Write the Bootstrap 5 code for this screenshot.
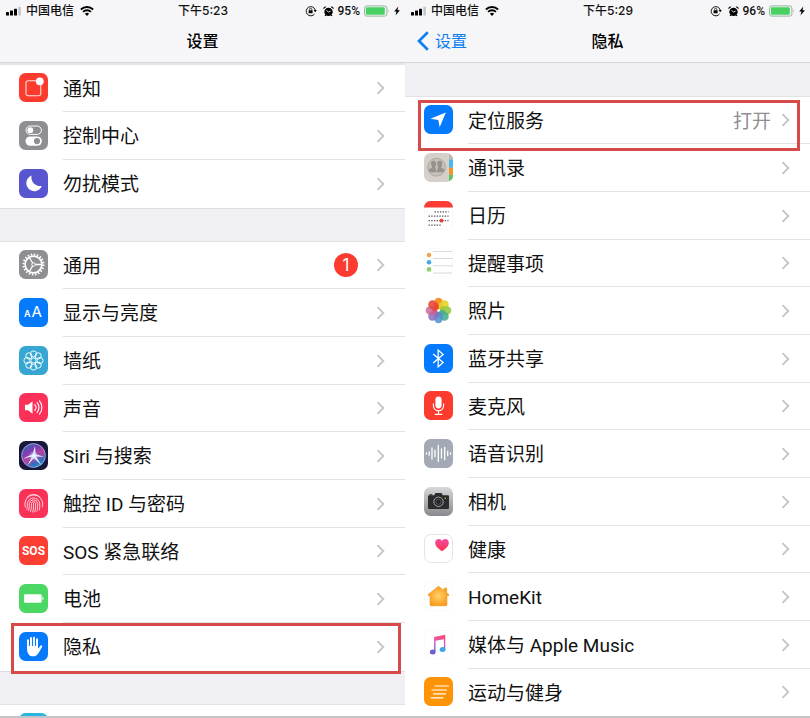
<!DOCTYPE html>
<html lang="zh-CN">
<head>
<meta charset="utf-8">
<meta name="viewport" content="width=device-width, initial-scale=1">
<title>设置 · 隐私</title>
<link href="https://cdn.jsdelivr.net/npm/bootstrap@5.3.0/dist/css/bootstrap.min.css" rel="stylesheet">
<style>
  body { font-family: Inter, "Noto Sans CJK SC", sans-serif; color: #111; background: #fff; }
  .screens { border-bottom: 2px solid #c4c4c6; }
  .screen { background: #efeff4; }
  .topbar { background: #f6f6f8; border-bottom: 1px solid #d6d6da; }
  .status { height: 21px; padding: 1px 5px 0 6px; font-size: 12px; line-height: 20px; display: grid; grid-template-columns: 1fr auto 1fr; }
  .carrier { gap: 4px; }
  .carrier span { margin-right: 2px; }
  .indicators { gap: 4px; }
  .indicators svg:first-child { margin-right: 2px; }
  .percent { font-family: Roboto, sans-serif; }
  .titlebar { height: 41px; font-size: 16px; line-height: 40px; display: grid; grid-template-columns: 1fr auto 1fr; }
  .titlebar h1 { font-size: 16px; line-height: 40px; font-weight: 500; color: #000; }
  .back { color: #0d7fee; padding-left: 12px; gap: 6px; height: 40px; }
  .set-row { height: 48px; color: #111; }
  .set-row:nth-child(3n+1) { height: 47px; }
  .set-link { padding-left: 19px; gap: 15px; font-size: 19px; line-height: 28px; }
  .set-link > svg { margin-bottom: 2px; }
  .set-body { border-bottom: 1px solid #e2e2e5; padding-right: 20px; gap: 10px; }
  .set-body > span:not(.count) { padding-top: 3px; }
  .set-row:last-child .set-body { border-bottom-color: transparent; }
  .set-value { color: #8e8e93; }
  .latin { font-family: Roboto, "Noto Sans CJK SC", sans-serif; }
  .count { width: 24px; height: 24px; margin-right: 8px; background: #fc3b30; font-size: 17px; line-height: 24px; }
  .gap-top { height: 2px; background: #e4e5e9; }
  .gap-section { height: 34px; border-top: 1px solid #dedee2; border-bottom: 1px solid #e2e2e6; }
  .gap-first { height: 34px; border-bottom: 1px solid #e2e2e6; }
  .outlined { z-index: 2; }
  .outlined::after { content: ""; position: absolute; border: 3px solid #d64b4a; pointer-events: none; }
  .outlined-a::after { inset: 0 4px -3px 11px; }
  .outlined-b::after { inset: 3px 10px -7px 13px; }
</style>
<script src="https://cdn.jsdelivr.net/npm/bootstrap@5.3.0/dist/js/bootstrap.bundle.min.js" defer></script>
</head>
<body>
<svg width="0" height="0" class="position-absolute" aria-hidden="true">
  <defs>
    <symbol id="chev" viewBox="0 0 9 14"><path d="M1.5 1.2 7.3 7l-5.8 5.8" fill="none" stroke="#c5c5ca" stroke-width="1.9"/></symbol>
    <symbol id="signal" viewBox="0 0 16 10"><rect x="0" y="6" width="3" height="3.5" rx=".6"/><rect x="4" y="4.5" width="3" height="5" rx=".6"/><rect x="8" y="2.7" width="3" height="6.8" rx=".6"/><rect x="12.4" y=".8" width="2.4" height="8.7" rx=".6" fill="#bfc3c2"/></symbol>
    <symbol id="wifi" viewBox="0 0 14 10"><path d="M.9 3.5a8.8 8.8 0 0 1 12.2 0M3.1 5.9a5.6 5.6 0 0 1 7.8 0" fill="none" stroke="#000" stroke-width="1.9"/><path d="M4.9 7.7a3.1 3.1 0 0 1 4.2 0L7 9.9z"/></symbol>
    <symbol id="rotlock" viewBox="0 0 12 12"><path d="M9.6 8.8A4.6 4.6 0 1 1 10.2 5" fill="none" stroke="#111" stroke-width="1"/><path d="M8.6 5h3.2l-1.6 2.2z"/><rect x="3.6" y="5.2" width="4" height="3.1" rx=".4"/><path d="M4.4 5.4v-.9a1.2 1.2 0 0 1 2.4 0v.9" fill="none" stroke="#111" stroke-width=".8"/></symbol>
    <symbol id="alarm" viewBox="0 0 11 11"><circle cx="5.5" cy="5.9" r="4.2"/><path d="M.5 3.2A2 2 0 0 1 3.4.8zM10.5 3.2A2 2 0 0 0 7.6.8zM2.4 8.6l-.8 1.200.8.5 1.200-1zM8.6 8.600l.8 1.200-.8.5-1.200-1z"/><path d="M3.5 4.2 5.5 6.2 7.6 5" fill="none" stroke="#f6f6f8" stroke-width=".9"/></symbol>
    <symbol id="batt" viewBox="0 0 26 12"><rect x=".5" y=".9" width="22.4" height="10.2" rx="2.2" fill="none" stroke="#93b69a" stroke-width="1"/><rect x="1.9" y="2.2" width="18.9" height="7.6" rx="1" fill="#46d160"/><path d="M24 4.3q1.4 1.7 0 3.4z" fill="#93a897"/></symbol>
    <symbol id="bolt" viewBox="0 0 6 10"><path d="M4.300.5.2 5.500h2.300L1.500 9.500 5.900 4.300H3.500z"/></symbol>
    <linearGradient id="camG" x2="0" y2="1"><stop stop-color="#d8d8da"/><stop offset="1" stop-color="#8a8a8e"/></linearGradient>
    <linearGradient id="heartG" x2="0" y2="1"><stop stop-color="#f74ba0"/><stop offset="1" stop-color="#fb3448"/></linearGradient>
    <radialGradient id="homeG"><stop stop-color="#ffd36c"/><stop offset="1" stop-color="#f89c1c"/></radialGradient>
    <linearGradient id="musicG" gradientUnits="userSpaceOnUse" x1="18" y1="4" x2="12" y2="24"><stop stop-color="#fb4b6c"/><stop offset=".45" stop-color="#e459b6"/><stop offset=".75" stop-color="#6d66d8"/><stop offset="1" stop-color="#6a5fd0"/></linearGradient>
    <linearGradient id="siriG" x1="0.2" y1="0" x2=".8" y2="1"><stop stop-color="#2d6cae"/><stop offset=".3" stop-color="#7c3fb4"/><stop offset=".55" stop-color="#b8439f"/><stop offset=".8" stop-color="#2f6fc4"/><stop offset="1" stop-color="#1fb6c0"/></linearGradient>
    <radialGradient id="siriW"><stop stop-color="#fff"/><stop offset=".4" stop-color="#d8e9ff" stop-opacity=".7"/><stop offset="1" stop-color="#8fb6ff" stop-opacity="0"/></radialGradient>
  </defs>
</svg>

<main class="container-fluid p-0">
<div class="row g-0 vh-100 overflow-hidden screens">

<section class="col-6 screen h-100 overflow-hidden" aria-label="设置">
  <header class="topbar">
    <div class="status fw-medium">
      <div class="carrier d-flex align-items-center"><svg width="16" height="10"><use href="#signal"/></svg><span>中国电信</span><svg width="14" height="10"><use href="#wifi"/></svg></div>
      <time>下午5:23</time>
      <div class="indicators d-flex align-items-center justify-content-end"><svg width="12" height="12"><use href="#rotlock"/></svg><svg width="11" height="11"><use href="#alarm"/></svg><span class="percent">95%</span><svg width="26" height="12"><use href="#batt"/></svg><svg width="6" height="10"><use href="#bolt"/></svg></div>
    </div>
    <div class="titlebar"><span></span><h1 class="m-0">设置</h1><span></span></div>
  </header>
  <div class="gap-top"></div>

  <ul class="list-group list-group-flush rounded-0">
    <li class="list-group-item border-0 p-0 set-row"><a href="#" class="set-link d-flex align-items-center h-100 text-reset text-decoration-none">
      <svg width="29" height="29" viewBox="0 0 29 29"><rect width="29" height="29" rx="6.5" fill="#fc3b2f"/><path d="M17.5 7.7H9.2a2.2 2.2 0 0 0-2.2 2.2v10.6a2.2 2.2 0 0 0 2.2 2.2h10.4a2.2 2.2 0 0 0 2.2-2.2V12" fill="none" stroke="#ffe2de" stroke-width="1.1"/><circle cx="20.8" cy="8.3" r="3.9" fill="#fff"/></svg>
      <span class="set-body d-flex align-items-center flex-grow-1 h-100"><span class="me-auto">通知</span><svg width="9" height="14"><use href="#chev"/></svg></span></a></li>
    <li class="list-group-item border-0 p-0 set-row"><a href="#" class="set-link d-flex align-items-center h-100 text-reset text-decoration-none">
      <svg width="29" height="29" viewBox="0 0 29 29"><rect width="29" height="29" rx="6.5" fill="#8e8e93"/><rect x="7" y="5" width="15.4" height="8.4" rx="4.2" fill="none" stroke="#fff"/><circle cx="11.3" cy="9.2" r="2.9" fill="#fff"/><rect x="6.5" y="15.4" width="16.4" height="9.4" rx="4.7" fill="#fff"/><circle cx="18" cy="20.1" r="3.1" fill="#8e8e93"/></svg>
      <span class="set-body d-flex align-items-center flex-grow-1 h-100"><span class="me-auto">控制中心</span><svg width="9" height="14"><use href="#chev"/></svg></span></a></li>
    <li class="list-group-item border-0 p-0 set-row"><a href="#" class="set-link d-flex align-items-center h-100 text-reset text-decoration-none">
      <svg width="29" height="29" viewBox="0 0 29 29"><rect width="29" height="29" rx="6.5" fill="#5855d0"/><path d="M12.6 6.6a8.6 8.6 0 0 0 10.2 10.3A8 8 0 1 1 12.6 6.6z" fill="#fff"/></svg>
      <span class="set-body d-flex align-items-center flex-grow-1 h-100"><span class="me-auto">勿扰模式</span><svg width="9" height="14"><use href="#chev"/></svg></span></a></li>
  </ul>
  <div class="gap-section"></div>

  <ul class="list-group list-group-flush rounded-0">
    <li class="list-group-item border-0 p-0 set-row"><a href="#" class="set-link d-flex align-items-center h-100 text-reset text-decoration-none">
      <svg width="29" height="29" viewBox="0 0 29 29"><rect width="29" height="29" rx="6.5" fill="#8e8e93"/><circle cx="14.5" cy="14.5" r="8.4" fill="none" stroke="#fff" stroke-width="1.7"/><circle cx="14.5" cy="14.5" r="10" fill="none" stroke="#fff" stroke-width="2" stroke-dasharray="1.57 1.57"/><circle cx="14.5" cy="14.5" r="1.7" fill="none" stroke="#fff"/><path d="M16.2 14.5h6.4M13.6 13 10.4 7.5M13.6 16l-3.2 5.5" stroke="#fff" stroke-width="1.3"/></svg>
      <span class="set-body d-flex align-items-center flex-grow-1 h-100"><span class="me-auto">通用</span><span class="count rounded-circle text-white text-center">1</span><svg width="9" height="14"><use href="#chev"/></svg></span></a></li>
    <li class="list-group-item border-0 p-0 set-row"><a href="#" class="set-link d-flex align-items-center h-100 text-reset text-decoration-none">
      <svg width="29" height="29" viewBox="0 0 29 29" font-family="Inter, sans-serif" fill="#fff"><rect width="29" height="29" rx="6.5" fill="#067afd"/><text x="5" y="19" font-size="9" font-weight="600">A</text><text x="12.600" y="19" font-size="15">A</text></svg>
      <span class="set-body d-flex align-items-center flex-grow-1 h-100"><span class="me-auto">显示与亮度</span><svg width="9" height="14"><use href="#chev"/></svg></span></a></li>
    <li class="list-group-item border-0 p-0 set-row"><a href="#" class="set-link d-flex align-items-center h-100 text-reset text-decoration-none">
      <svg width="29" height="29" viewBox="0 0 29 29"><rect width="29" height="29" rx="6.5" fill="#37a6d2"/><g fill="none" stroke="#f0fbff" stroke-width="1"><circle cx="14.5" cy="14.5" r="2.6"/><circle cx="14.5" cy="8" r="3.1"/><circle cx="19.1" cy="9.9" r="3.1"/><circle cx="21" cy="14.5" r="3.1"/><circle cx="19.1" cy="19.1" r="3.1"/><circle cx="14.5" cy="21" r="3.1"/><circle cx="9.9" cy="19.1" r="3.1"/><circle cx="8" cy="14.5" r="3.1"/><circle cx="9.9" cy="9.9" r="3.1"/></g></svg>
      <span class="set-body d-flex align-items-center flex-grow-1 h-100"><span class="me-auto">墙纸</span><svg width="9" height="14"><use href="#chev"/></svg></span></a></li>
    <li class="list-group-item border-0 p-0 set-row"><a href="#" class="set-link d-flex align-items-center h-100 text-reset text-decoration-none">
      <svg width="29" height="29" viewBox="0 0 29 29"><rect width="29" height="29" rx="6.5" fill="#fc3159"/><path d="M6 11.8h3.2l4.3-3.5v12.4l-4.3-3.5H6z" fill="#fff"/><path d="M15.8 11.7a4.2 4.2 0 0 1 0 5.6M18.1 9.7a7.2 7.2 0 0 1 0 9.6M20.5 7.9a10.4 10.4 0 0 1 0 13.2" fill="none" stroke="#fff" stroke-width="1.1" stroke-linecap="round"/></svg>
      <span class="set-body d-flex align-items-center flex-grow-1 h-100"><span class="me-auto">声音</span><svg width="9" height="14"><use href="#chev"/></svg></span></a></li>
    <li class="list-group-item border-0 p-0 set-row"><a href="#" class="set-link d-flex align-items-center h-100 text-reset text-decoration-none">
      <svg width="29" height="29" viewBox="0 0 29 29"><rect width="29" height="29" rx="6.5" fill="#17183a"/><circle cx="14.5" cy="14.5" r="11.9" fill="url(#siriG)" stroke="#aab6e6" stroke-width=".8"/><path d="M3.800 18.500c3.500-3 6.700-4.300 9.700-4.700L16 5l.6 8.300 8.600 2.400-8.300-.2 5.600 8.700-7.700-7.100L8.500 24.500l4.300-8.500c-3-.3-6 .8-9 2.500z" fill="#e4f3ff"/><circle cx="14.8" cy="14.700" r="5" fill="url(#siriW)"/></svg>
      <span class="set-body d-flex align-items-center flex-grow-1 h-100"><span class="me-auto latin">Siri 与搜索</span><svg width="9" height="14"><use href="#chev"/></svg></span></a></li>
    <li class="list-group-item border-0 p-0 set-row"><a href="#" class="set-link d-flex align-items-center h-100 text-reset text-decoration-none">
      <svg width="29" height="29" viewBox="0 0 29 29"><rect width="29" height="29" rx="6.5" fill="#fa3257"/><g fill="none" stroke="#ffe0e5" stroke-width=".9" stroke-linecap="round"><path d="M6.300 18a9 9 0 1 1 17 0M7.800 20.400c.5-1.700.5-3.500.6-6a6.200 6.200 0 0 1 12.300 0c0 2.400.2 4.300-.2 6.500M9.500 21.600c.8-2.200.8-4.700.9-7.200a4.200 4.200 0 0 1 8.300 0c.1 3 0 5.300-.7 7.800M11.500 22.600c.9-2.500.9-5.500 1-8.200a2.100 2.100 0 0 1 4.100 0c.1 3.200 0 5.800-.9 8.600M13.700 23c.8-2.600.9-5.500.9-8.500M8 8.100a9 9 0 0 1 13 0"/></g></svg>
      <span class="set-body d-flex align-items-center flex-grow-1 h-100"><span class="me-auto latin">触控 ID 与密码</span><svg width="9" height="14"><use href="#chev"/></svg></span></a></li>
    <li class="list-group-item border-0 p-0 set-row"><a href="#" class="set-link d-flex align-items-center h-100 text-reset text-decoration-none">
      <svg width="29" height="29" viewBox="0 0 29 29"><rect width="29" height="29" rx="6.5" fill="#fc3e33"/><text x="14.500" y="19" font-family="Roboto, sans-serif" font-size="12" font-weight="700" text-anchor="middle" fill="#fff">SOS</text></svg>
      <span class="set-body d-flex align-items-center flex-grow-1 h-100"><span class="me-auto latin">SOS 紧急联络</span><svg width="9" height="14"><use href="#chev"/></svg></span></a></li>
    <li class="list-group-item border-0 p-0 set-row"><a href="#" class="set-link d-flex align-items-center h-100 text-reset text-decoration-none">
      <svg width="29" height="29" viewBox="0 0 29 29"><rect width="29" height="29" rx="6.5" fill="#4bd763"/><rect x="5" y="10.200" width="17.600" height="8.600" rx="1" fill="#fff"/><path d="M23.400 12.600c1.500.3 1.500 3.500 0 3.800z" fill="#fff"/></svg>
      <span class="set-body d-flex align-items-center flex-grow-1 h-100"><span class="me-auto">电池</span><svg width="9" height="14"><use href="#chev"/></svg></span></a></li>
    <li class="list-group-item border-0 p-0 set-row outlined outlined-a"><a href="#" class="set-link d-flex align-items-center h-100 text-reset text-decoration-none">
      <svg width="29" height="29" viewBox="0 0 29 29"><rect width="29" height="29" rx="6.5" fill="#067afd"/><g stroke="#fff" stroke-linecap="round" fill="none"><path d="M9 8.300v8M12 5.900v10M15 5.600v10M18 7.300v9" stroke-width="1.900"/><path d="M22.200 14.400 18.600 20" stroke-width="2.100"/></g><path d="M8.050 14h10.900v3l1.800-1.800 1.200 1.300c-1.500 2.800-2.500 5.200-4.300 6.700-2.300 1.700-5.600 1.500-7.500-.3-1.600-1.500-2.100-3.900-2.100-6.400z" fill="#fff"/></svg>
      <span class="set-body d-flex align-items-center flex-grow-1 h-100"><span class="me-auto">隐私</span><svg width="9" height="14"><use href="#chev"/></svg></span></a></li>
  </ul>
  <div class="gap-section"></div>
  <ul class="list-group list-group-flush rounded-0">
    <li class="list-group-item border-0 p-0 set-row"><a href="#" class="set-link d-flex align-items-center h-100" aria-label="App Store"><svg width="29" height="29" viewBox="0 0 29 29"><rect width="29" height="29" rx="6.5" fill="#2bb5e0"/></svg></a></li>
  </ul>
</section>

<section class="col-6 screen h-100 overflow-hidden" aria-label="隐私">
  <header class="topbar">
    <div class="status fw-medium">
      <div class="carrier d-flex align-items-center"><svg width="16" height="10"><use href="#signal"/></svg><span>中国电信</span><svg width="14" height="10"><use href="#wifi"/></svg></div>
      <time>下午5:29</time>
      <div class="indicators d-flex align-items-center justify-content-end"><svg width="12" height="12"><use href="#rotlock"/></svg><svg width="11" height="11"><use href="#alarm"/></svg><span class="percent">96%</span><svg width="26" height="12"><use href="#batt"/></svg><svg width="6" height="10"><use href="#bolt"/></svg></div>
    </div>
    <div class="titlebar"><a href="#" class="back d-flex align-items-center text-decoration-none"><svg width="12" height="20" viewBox="0 0 12 20"><path d="M10.800 1.200 2 10l8.800 8.800" fill="none" stroke="#0d7fee" stroke-width="2.700"/></svg><span>设置</span></a><h1 class="m-0">隐私</h1><span></span></div>
  </header>
  <div class="gap-first"></div>

  <ul class="list-group list-group-flush rounded-0">
    <li class="list-group-item border-0 p-0 set-row outlined outlined-b"><a href="#" class="set-link d-flex align-items-center h-100 text-reset text-decoration-none">
      <svg width="29" height="29" viewBox="0 0 29 29"><rect width="29" height="29" rx="6.5" fill="#067afd"/><path d="M21.800 7.400 15.700 22.200 14.300 14.900 6.400 13.800z" fill="#fff"/></svg>
      <span class="set-body d-flex align-items-center flex-grow-1 h-100"><span class="me-auto">定位服务</span><span class="set-value">打开</span><svg width="9" height="14"><use href="#chev"/></svg></span></a></li>
    <li class="list-group-item border-0 p-0 set-row"><a href="#" class="set-link d-flex align-items-center h-100 text-reset text-decoration-none">
      <svg width="29" height="29" viewBox="0 0 29 29"><rect width="29" height="29" rx="6.5" fill="#d5d1ca"/><path d="M25 1.200h.8A6 6 0 0 1 29 6.500H25z" fill="#b9b8b5"/><path d="M25 6.500h4v8.300h-4z" fill="#4fb6e6"/><path d="M25 14.800h4v7h-4z" fill="#f5942e"/><path d="M25 21.800h4c.2 3.500-1.300 5.300-4 6.200z" fill="#5fc163"/><circle cx="12.600" cy="14.200" r="8.900" fill="#c5c0b8" stroke="#a5a19b" stroke-width=".8"/><path d="M9.600 7.800c2 0 2.700 1.600 2.500 3.500-.1 1.300-.8 2.300-.8 3.200 0 1.400 1.200 1.700 1.200 4.700H6.200c-1-1-1.600-2-1.700-3 2.500-.8 3.500-1 3.500-2 0-1.100-.8-1.800-.9-3-.2-2 .6-3.400 2.500-3.400zM15.700 7.800c-2 0-2.700 1.600-2.500 3.500.1 1.300.8 2.300.8 3.200 0 1.400-1.100 1.700-1.100 4.700H19c1-1 1.600-2 1.700-3-2.500-.8-3.300-1-3.300-2 0-1.100.7-1.800.8-3 .2-2-.6-3.400-2.500-3.400z" fill="#96928c"/></svg>
      <span class="set-body d-flex align-items-center flex-grow-1 h-100"><span class="me-auto">通讯录</span><svg width="9" height="14"><use href="#chev"/></svg></span></a></li>
    <li class="list-group-item border-0 p-0 set-row"><a href="#" class="set-link d-flex align-items-center h-100 text-reset text-decoration-none">
      <svg width="29" height="29" viewBox="0 0 29 29"><rect x=".25" y=".25" width="28.500" height="28.500" rx="6.300" fill="#fff" stroke="#f0f0f2" stroke-width=".5"/><path d="M0 6.600A6.500 6.500 0 0 1 6.500 0h16A6.500 6.500 0 0 1 29 6.600z" fill="#fb3c36"/><g stroke="#555" stroke-width="1.200" stroke-dasharray="1.400 1.300" fill="none"><path d="M10.500 10.800h14M4.500 15.200h20M4.500 19.700h20M4.500 24.100h13.500"/></g><circle cx="17.500" cy="19.700" r="1.900" fill="#e93a38"/></svg>
      <span class="set-body d-flex align-items-center flex-grow-1 h-100"><span class="me-auto">日历</span><svg width="9" height="14"><use href="#chev"/></svg></span></a></li>
    <li class="list-group-item border-0 p-0 set-row"><a href="#" class="set-link d-flex align-items-center h-100 text-reset text-decoration-none">
      <svg width="29" height="29" viewBox="0 0 29 29"><rect x=".25" y=".25" width="28.500" height="28.500" rx="6.300" fill="#fff" stroke="#f2f2f4" stroke-width=".5"/><path d="M9 3.500h19M9 10.500h20M9 17.800h20M9 25h19" stroke="#d6d6d9" stroke-width=".9"/><circle cx="5" cy="7" r="2.300" fill="#f3a34a"/><circle cx="5" cy="14.200" r="2.300" fill="#49a6ea"/><circle cx="5" cy="21.400" r="2.300" fill="#8ed06c"/></svg>
      <span class="set-body d-flex align-items-center flex-grow-1 h-100"><span class="me-auto">提醒事项</span><svg width="9" height="14"><use href="#chev"/></svg></span></a></li>
    <li class="list-group-item border-0 p-0 set-row"><a href="#" class="set-link d-flex align-items-center h-100 text-reset text-decoration-none">
      <svg width="29" height="29" viewBox="0 0 29 29"><g><rect x="10.300" y="1.700" width="8.400" height="11.800" rx="4.200" fill="#f7942a"/><rect x="10.300" y="1.700" width="8.400" height="11.800" rx="4.200" fill="#e6d22a" opacity=".9" transform="rotate(45 14.500 14.500)"/><rect x="10.300" y="1.700" width="8.400" height="11.800" rx="4.200" fill="#94c83f" opacity=".88" transform="rotate(90 14.500 14.500)"/><rect x="10.300" y="1.700" width="8.400" height="11.800" rx="4.200" fill="#3fab86" opacity=".85" transform="rotate(135 14.500 14.500)"/><rect x="10.300" y="1.700" width="8.400" height="11.800" rx="4.200" fill="#4b8fd0" opacity=".85" transform="rotate(180 14.500 14.500)"/><rect x="10.300" y="1.700" width="8.400" height="11.800" rx="4.200" fill="#866dba" opacity=".85" transform="rotate(225 14.500 14.500)"/><rect x="10.300" y="1.700" width="8.400" height="11.800" rx="4.200" fill="#cb5f90" opacity=".8" transform="rotate(270 14.500 14.500)"/><rect x="10.300" y="1.700" width="8.400" height="11.800" rx="4.200" fill="#e83f2e" opacity=".85" transform="rotate(315 14.500 14.500)"/></g><circle cx="14.500" cy="14.500" r="1.200" fill="#fff"/></svg>
      <span class="set-body d-flex align-items-center flex-grow-1 h-100"><span class="me-auto">照片</span><svg width="9" height="14"><use href="#chev"/></svg></span></a></li>
    <li class="list-group-item border-0 p-0 set-row"><a href="#" class="set-link d-flex align-items-center h-100 text-reset text-decoration-none">
      <svg width="29" height="29" viewBox="0 0 29 29"><rect width="29" height="29" rx="6.5" fill="#067afd"/><path d="m9.200 9.900 9.900 8.700-4.900 4.300V6.100l4.900 4.300-9.900 8.700" fill="none" stroke="#fff" stroke-width="1.300"/></svg>
      <span class="set-body d-flex align-items-center flex-grow-1 h-100"><span class="me-auto">蓝牙共享</span><svg width="9" height="14"><use href="#chev"/></svg></span></a></li>
    <li class="list-group-item border-0 p-0 set-row"><a href="#" class="set-link d-flex align-items-center h-100 text-reset text-decoration-none">
      <svg width="29" height="29" viewBox="0 0 29 29"><rect width="29" height="29" rx="6.5" fill="#fc3b2f"/><rect x="11.400" y="5.400" width="6.200" height="12" rx="3.100" fill="#fff"/><path d="M9.400 12.500v2.300a5.100 5.100 0 0 0 10.200 0v-2.300M14.500 20v3.200M10.700 23.400h7.600" fill="none" stroke="#fff" stroke-width="1.100"/></svg>
      <span class="set-body d-flex align-items-center flex-grow-1 h-100"><span class="me-auto">麦克风</span><svg width="9" height="14"><use href="#chev"/></svg></span></a></li>
    <li class="list-group-item border-0 p-0 set-row"><a href="#" class="set-link d-flex align-items-center h-100 text-reset text-decoration-none">
      <svg width="29" height="29" viewBox="0 0 29 29"><rect width="29" height="29" rx="6.5" fill="#a3a9b5"/><path d="M2.500 13.800v1.400M5.200 12.800v3.400M8 9v11M11 11.200v6.600M14.300 6.400v16.200M17.500 10v9M20.700 8.300v12.400M23.700 12.300v4.400M26.500 13.800v1.400" stroke="#fff" stroke-width="1.300" stroke-linecap="round"/></svg>
      <span class="set-body d-flex align-items-center flex-grow-1 h-100"><span class="me-auto">语音识别</span><svg width="9" height="14"><use href="#chev"/></svg></span></a></li>
    <li class="list-group-item border-0 p-0 set-row"><a href="#" class="set-link d-flex align-items-center h-100 text-reset text-decoration-none">
      <svg width="29" height="29" viewBox="0 0 29 29"><rect width="29" height="29" rx="6.5" fill="url(#camG)"/><path d="M5.200 8.300h5l1.300-2.300h6l1.300 2.300h5a1.200 1.200 0 0 1 1.200 1.200v11.300a1.200 1.200 0 0 1-1.200 1.200H5.200A1.200 1.200 0 0 1 4 20.800V9.500a1.200 1.200 0 0 1 1.200-1.200z" fill="#2c2c2f"/><path d="M5.500 7.200h2.800v1.300H5.500z" fill="#2c2c2f"/><circle cx="14.500" cy="14.800" r="4.700" fill="#252528" stroke="#a9a9ad" stroke-width="1"/><circle cx="14.500" cy="14.800" r="2.600" fill="none" stroke="#66666b" stroke-width=".7"/><circle cx="21.300" cy="11.200" r=".8" fill="#f0b92c"/></svg>
      <span class="set-body d-flex align-items-center flex-grow-1 h-100"><span class="me-auto">相机</span><svg width="9" height="14"><use href="#chev"/></svg></span></a></li>
    <li class="list-group-item border-0 p-0 set-row"><a href="#" class="set-link d-flex align-items-center h-100 text-reset text-decoration-none">
      <svg width="29" height="29" viewBox="0 0 29 29"><rect x=".5" y=".5" width="28" height="28" rx="6.200" fill="#fff" stroke="#e4e4e7"/><path d="M18 17.300c-4-3-6.800-5.300-6.800-8.600 0-2.300 1.600-3.800 3.500-3.800 1.500 0 2.700.8 3.300 2 .6-1.200 1.800-2 3.300-2 1.900 0 3.500 1.500 3.500 3.800 0 3.300-2.800 5.600-6.800 8.600z" fill="url(#heartG)"/></svg>
      <span class="set-body d-flex align-items-center flex-grow-1 h-100"><span class="me-auto">健康</span><svg width="9" height="14"><use href="#chev"/></svg></span></a></li>
    <li class="list-group-item border-0 p-0 set-row"><a href="#" class="set-link d-flex align-items-center h-100 text-reset text-decoration-none">
      <svg width="29" height="29" viewBox="0 0 29 29"><rect x=".25" y=".25" width="28.500" height="28.500" rx="6.300" fill="#fff" stroke="#f0f0f2" stroke-width=".5"/><path d="M14.500 4.300 20 8.700V6.200h2.600v4.600l2.400 1.900-.9 1.300-1.200-.7v9.500a.9.900 0 0 1-.9.900H7a.9.900 0 0 1-.9-.9v-9.500l-1.200.7-.9-1.300z" fill="url(#homeG)" stroke="#f0921d" stroke-width=".7"/></svg>
      <span class="set-body d-flex align-items-center flex-grow-1 h-100"><span class="me-auto latin">HomeKit</span><svg width="9" height="14"><use href="#chev"/></svg></span></a></li>
    <li class="list-group-item border-0 p-0 set-row"><a href="#" class="set-link d-flex align-items-center h-100 text-reset text-decoration-none">
      <svg width="29" height="29" viewBox="0 0 29 29"><rect x=".25" y=".25" width="28.500" height="28.500" rx="6.300" fill="#fff" stroke="#f0f0f2" stroke-width=".5"/><g fill="url(#musicG)"><path d="M10.100 6.900 21.300 4.800v14.500h-1.400V9.200l-8.400 1.600v11h-1.400z"/><ellipse cx="8.700" cy="21.900" rx="2.900" ry="2.500"/></g><ellipse cx="18.600" cy="19.400" rx="2.900" ry="2.500" fill="#3aa8e8"/></svg>
      <span class="set-body d-flex align-items-center flex-grow-1 h-100"><span class="me-auto latin">媒体与 Apple Music</span><svg width="9" height="14"><use href="#chev"/></svg></span></a></li>
    <li class="list-group-item border-0 p-0 set-row"><a href="#" class="set-link d-flex align-items-center h-100 text-reset text-decoration-none">
      <svg width="29" height="29" viewBox="0 0 29 29"><rect width="29" height="29" rx="6.500" fill="#fd9408"/><path d="M11 9h13.500M8 13h14.500M9.500 16.900h12M7 20.800h12" stroke="#fff" stroke-width="1.200" stroke-linecap="round"/></svg>
      <span class="set-body d-flex align-items-center flex-grow-1 h-100"><span class="me-auto">运动与健身</span><svg width="9" height="14"><use href="#chev"/></svg></span></a></li>
  </ul>
</section>

</div>
</main>
</body>
</html>
